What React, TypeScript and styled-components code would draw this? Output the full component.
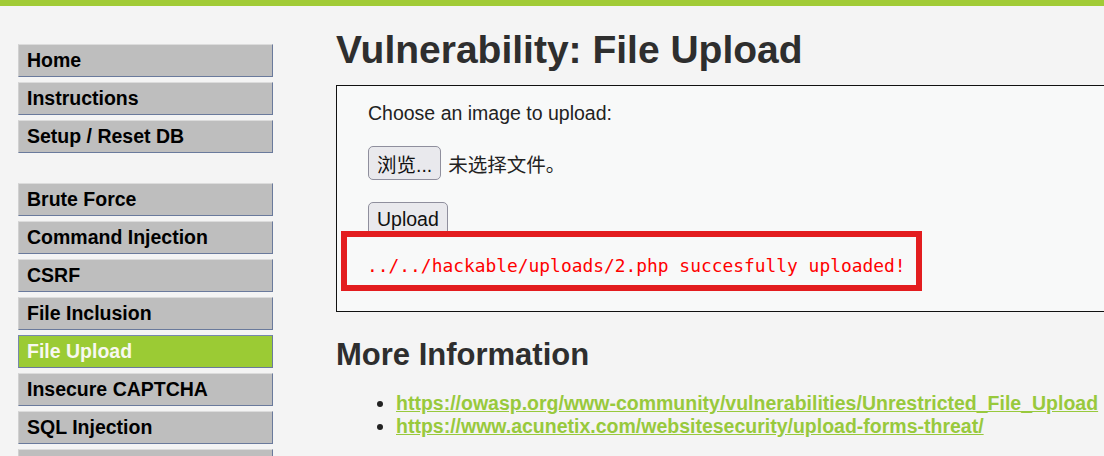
import React from "react";
import styled, { createGlobalStyle } from "styled-components";

const GlobalStyle = createGlobalStyle`
  html, body {
    margin: 0;
    padding: 0;
    overflow: hidden;
    background: #f4f4f4;
  }
  body {
    font-family: "Liberation Sans", Arial, "Noto Sans CJK SC", sans-serif;
    color: #222;
  }
`;

const Page = styled.div`
  width: 1104px;
  height: 456px;
  overflow: hidden;
  background: #f4f4f4;
`;

const TopBar = styled.div`
  height: 6px;
  background: #a1cb36;
`;

const Layout = styled.div`
  display: flex;
  align-items: flex-start;
`;

const Menu = styled.nav`
  width: 255px;
  margin: 38px 0 0 18px;
  flex-shrink: 0;
  display: flex;
  flex-direction: column;
  gap: 30px;
`;

const MenuGroup = styled.ul`
  list-style: none;
  margin: 0;
  padding: 0;
  display: flex;
  flex-direction: column;
  gap: 5px;
`;

const MenuItem = styled.li<{ $active?: boolean }>`
  box-sizing: border-box;
  height: 33px;
  line-height: 31px;
  padding-left: 8px;
  font-size: 19.5px;
  font-weight: bold;
  white-space: nowrap;
  background: ${(p) => (p.$active ? "#9bcb34" : "#bebebe")};
  color: ${(p) => (p.$active ? "#f8f8f0" : "#000")};
  border-top: 1px solid ${(p) => (p.$active ? "#7787ad" : "#dcdcdc")};
  border-left: 1px solid ${(p) => (p.$active ? "#7787ad" : "#d0d0d0")};
  border-right: 1px solid #6a7a9c;
  border-bottom: 1px solid #6a7a9c;
`;

const Main = styled.main`
  margin-left: 63px;
  flex-shrink: 0;
  width: 800px;
`;

const Title = styled.h1`
  margin: 20px 0 0;
  font-size: 39px;
  line-height: 47px;
  font-weight: bold;
  color: #2e2e2e;
  white-space: nowrap;
`;

const Box = styled.div`
  margin-top: 12px;
  border: 1px solid #111;
  background: #f8f9f9;
  padding: 16px 0 20px 4px;
`;

const Form = styled.div`
  margin-left: 27px;
  display: flex;
  flex-direction: column;
  align-items: flex-start;
  gap: 22px;
`;

const Label = styled.div`
  font-size: 19.5px;
  line-height: 22px;
  color: #222;
`;

const FileRow = styled.div`
  display: flex;
  align-items: center;
  gap: 7px;
`;

const Button = styled.button`
  box-sizing: border-box;
  height: 34px;
  padding: 0 8px;
  font-family: "Liberation Sans", Arial, "Noto Sans CJK SC", sans-serif;
  font-size: 19.5px;
  color: #111;
  background: #e9e9ed;
  border: 1px solid #8f8f9d;
  border-radius: 5px;
`;

const FileStatus = styled.span`
  font-family: "Noto Sans CJK SC", sans-serif;
  font-size: 19.5px;
  color: #222;
`;

const Result = styled.pre`
  box-sizing: border-box;
  width: 581px;
  height: 60px;
  margin: -5px 0 0 0;
  padding: 18px 0 0 20px;
  border: 6px solid #e31d1f;
  background: #f8f9f9;
  position: relative;
  font-family: "DejaVu Sans Mono", monospace;
  font-size: 17.9px;
  line-height: 21px;
  color: #ff0000;
`;

const SubTitle = styled.h2`
  margin: 25px 0 0;
  font-size: 31px;
  line-height: 36px;
  font-weight: bold;
  color: #2e2e2e;
`;

const Links = styled.ul`
  margin: 19px 0 0;
  padding-left: 60px;
  font-size: 19.5px;
  line-height: 23px;
  white-space: nowrap;
`;

const LinkItem = styled.li`
  color: #222;
`;

const Link = styled.a`
  color: #98c93c;
  font-weight: bold;
  text-decoration: underline;
`;

const groups: { label: string; active?: boolean }[][] = [
  [{ label: "Home" }, { label: "Instructions" }, { label: "Setup / Reset DB" }],
  [
    { label: "Brute Force" },
    { label: "Command Injection" },
    { label: "CSRF" },
    { label: "File Inclusion" },
    { label: "File Upload", active: true },
    { label: "Insecure CAPTCHA" },
    { label: "SQL Injection" },
    { label: "SQL Injection (Blind)" },
  ],
];

export default function App() {
  return (
    <Page>
      <GlobalStyle />
      <TopBar />
      <Layout>
        <Menu>
          {groups.map((g, i) => (
            <MenuGroup key={i}>
              {g.map((item) => (
                <MenuItem key={item.label} $active={item.active}>
                  {item.label}
                </MenuItem>
              ))}
            </MenuGroup>
          ))}
        </Menu>
        <Main>
          <Title>Vulnerability: File Upload</Title>
          <Box>
            <Form>
              <Label>Choose an image to upload:</Label>
              <FileRow>
                <Button>浏览...</Button>
                <FileStatus>未选择文件。</FileStatus>
              </FileRow>
              <Button>Upload</Button>
            </Form>
            <Result>../../hackable/uploads/2.php succesfully uploaded!</Result>
          </Box>
          <SubTitle>More Information</SubTitle>
          <Links>
            <LinkItem>
              <Link href="#">https://owasp.org/www-community/vulnerabilities/Unrestricted_File_Upload</Link>
            </LinkItem>
            <LinkItem>
              <Link href="#">https://www.acunetix.com/websitesecurity/upload-forms-threat/</Link>
            </LinkItem>
          </Links>
        </Main>
      </Layout>
    </Page>
  );
}
